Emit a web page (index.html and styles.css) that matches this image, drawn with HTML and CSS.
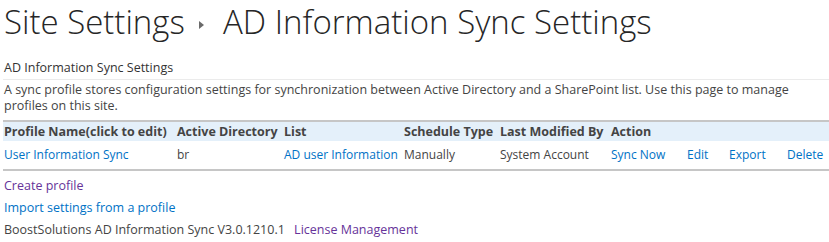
FILE: index.html
```html
<!DOCTYPE html>
<html lang="en">
<head>
  <meta charset="UTF-8" />
  <title>AD Information Sync Settings</title>
  <link rel="stylesheet" href="styles.css">
</head>
<body>
  <!-- page title -->
  <h1 class="page-title">Site Settings <span class="crumb-arrow"></span> AD Information Sync Settings</h1>

  <section class="sync-settings">
    <div class="section-head">AD Information Sync Settings</div>
    <p class="desc">A sync profile stores configuration settings for synchronization between Active Directory and a SharePoint list. Use this page to manage profiles on this site.</p>

    <table class="profiles">
      <colgroup>
        <col class="c-name"><col class="c-ad"><col class="c-list"><col class="c-sched"><col class="c-mod">
        <col class="c-sync"><col class="c-edit"><col class="c-export"><col class="c-delete">
      </colgroup>
      <thead>
        <tr>
          <th>Profile Name(click to edit)</th>
          <th>Active Directory</th>
          <th>List</th>
          <th>Schedule Type</th>
          <th>Last Modified By</th>
          <th colspan="4">Action</th>
        </tr>
      </thead>
      <tbody>
        <tr>
          <td><a href="#">User Information Sync</a></td>
          <td>br</td>
          <td><a href="#">AD user Information</a></td>
          <td>Manually</td>
          <td>System Account</td>
          <td><a href="#">Sync Now</a></td>
          <td><a href="#">Edit</a></td>
          <td><a href="#">Export</a></td>
          <td><a href="#">Delete</a></td>
        </tr>
      </tbody>
    </table>

    <ul class="links">
      <li><a href="#" class="visited">Create profile</a></li>
      <li><a href="#">Import settings from a profile</a></li>
      <li>BoostSolutions AD Information Sync V3.0.1210.1 <a href="#" class="visited license">License Management</a></li>
    </ul>
  </section>
</body>
</html>
```

FILE: styles.css
```css
/* reset */
*,*::before,*::after{box-sizing:border-box;margin:0;padding:0}
html,body{background:#fff}
body{
  padding:0 0 0 4px;
  font-family:"Open Sans","Noto Sans",sans-serif;
  font-size:12.5px;color:#444;
}
a{color:#0072c6;text-decoration:none}
a.visited{color:#663399}

/* title */
.page-title{
  font-weight:300;font-size:33px;line-height:44px;color:#262626;
}
.crumb-arrow{
  display:inline-block;width:0;height:0;margin:0 10px 0 6px;
  border-left:5px solid #6a6a6a;border-top:4px solid transparent;border-bottom:4px solid transparent;
  vertical-align:middle;
}

/* section */
.sync-settings{margin-left:-1px;margin-top:13px}
.section-head{padding-left:1px;line-height:22px;border-bottom:1px solid #ebebeb;color:#333}
.desc{padding:2px 20px 0 1px;line-height:16px;height:40px;color:#444}

/* table */
.profiles{width:100%;border-collapse:collapse;table-layout:fixed;border-top:2px solid #c6c6c6;border-bottom:2px solid #c6c6c6}
.profiles th{background:#e4f0fa;font-weight:700;text-align:left;line-height:19px;padding:0 1px;white-space:nowrap;color:#444}
.profiles td{font-size:12px;line-height:28px;padding:0 1px;white-space:nowrap}
.c-name{width:173px}.c-ad{width:107px}.c-list{width:120px}.c-sched{width:96px}.c-mod{width:111px}
.c-sync{width:76px}.c-edit{width:42px}.c-export{width:58px}

/* links */
.links{list-style:none;padding:4px 0 0 1px}
.links li{line-height:22px}
.license{margin-left:6px}
```
